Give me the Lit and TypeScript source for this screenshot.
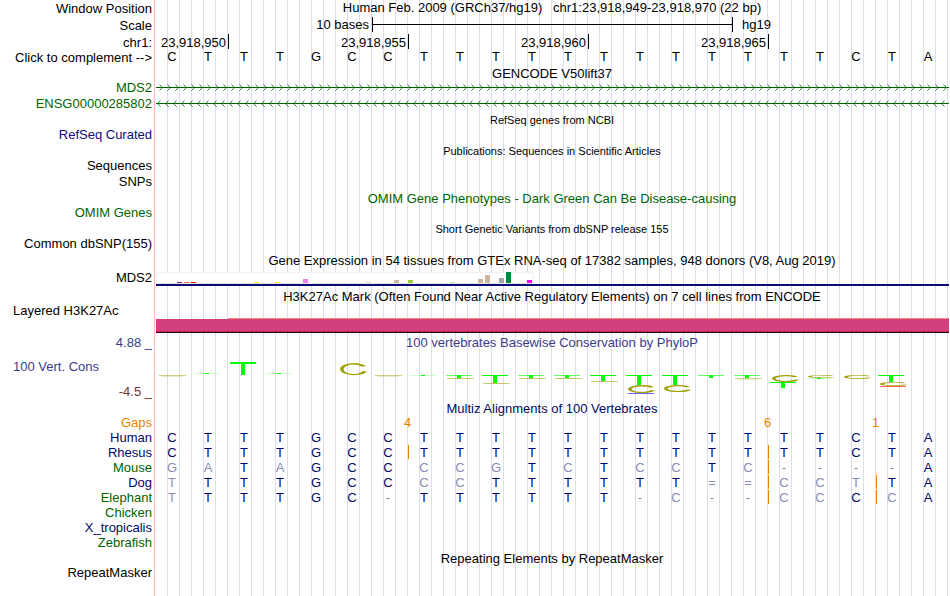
import { LitElement, html, svg, css, nothing } from "lit";
import { customElement, property } from "lit/decorators.js";
import { classMap } from "lit/directives/class-map.js";

const REFERENCE = "CTTTGCCTTTTTTTTTTTTCTA";

interface Species {
  name: string;
  tone: string;
  bases: string;
  gaps: number[];
}

const SPECIES: Species[] = [
  { name: "Human", tone: "navy", bases: REFERENCE, gaps: [] },
  { name: "Rhesus", tone: "navy", bases: REFERENCE, gaps: [7, 17] },
  { name: "Mouse", tone: "green", bases: "GATAGCCCCGTCTCCTC----A", gaps: [17] },
  { name: "Dog", tone: "navy", bases: "TTTTGCCCCTTTTTT==CCTTA", gaps: [17, 20] },
  { name: "Elephant", tone: "green", bases: "TTTTGC-TTTTTT-C--CCCCA", gaps: [17, 20] },
  { name: "Chicken", tone: "green", bases: "", gaps: [] },
  { name: "X_tropicalis", tone: "navy", bases: "", gaps: [] },
  { name: "Zebrafish", tone: "green", bases: "", gaps: [] },
];

/* Tissue slot, bar height and colour of each expressed tissue */
const TISSUES: [number, number, string][] = [
  [3, 1, "#8b1c62"], [4, 1, "#ee6a50"], [5, 1, "#ff0000"],
  [14, 1, "#eeee00"], [17, 1, "#eeee00"], [21, 4, "#ee82ee"],
  [30, 1, "#eed5d2"], [34, 3, "#cdb79e"], [36, 3, "#9acd32"],
  [42, 1, "#b4eeb4"], [46, 4, "#cdb79e"], [47, 8, "#cdb79e"],
  [49, 5, "#a6a6a6"], [50, 11, "#008b45"], [53, 3, "#ff00ff"],
];

/* Logo marks per base: kind, top, height */
type Mark = [string, number, number];
const LOGO: Mark[][] = [
  [["C", 25, 2]], [["T", 23, 1]], [["T", 12, 13]], [["T", 23, 1]], [],
  [["C", 13, 12]], [["C", 25, 2]], [["T", 25, 1]],
  [["T", 25, 3], ["C", 28, 1]], [["T", 25, 8], ["C", 33, 1]],
  [["T", 25, 3], ["C", 28, 1]], [["T", 25, 3], ["C", 28, 1]],
  [["T", 25, 6], ["C", 31, 1]], [["T", 25, 10], ["C", 35, 8], ["A", 43, 1]],
  [["T", 25, 10], ["C", 35, 7]], [["T", 25, 3]],
  [["T", 25, 3], ["C", 28, 2]], [["C", 25, 7], ["T", 32, 6]],
  [["C", 25, 3], ["T", 28, 1]], [["C", 25, 4]],
  [["T", 25, 7], ["C", 32, 4], ["X", 36, 1]], [],
];

function mark([kind, y, h]: Mark) {
  if (kind === "T") {
    const tone = h > 5 ? 1 : h > 2 ? 0.6 : 0.2;
    return svg`
      <rect x="4" y=${y} width="26" height=${h > 12 ? 2 : 1} fill="#00ff00" fill-opacity=${tone}></rect>
      <rect x="15" y=${y} width="4" height=${h} fill="#00ff00"></rect>`;
  }
  if (kind === "C") {
    if (h < 3) {
      return svg`
        <rect x="5" y=${y} width="27" height="1" fill="#a0a000" fill-opacity="0.5"></rect>
        <rect x="8" y=${y + h - 1} width="20" height="1" fill="#a0a000" fill-opacity="0.2"></rect>`;
    }
    const r = h / 2;
    const c = y + r;
    const t = Math.max(r - 1.3, r * 0.65);
    return svg`<path fill="#a0a000" d="M32 ${c - r * 0.5} A14 ${r} 0 1 0 33 ${c + r * 0.4}
      L29 ${c + t * 0.4} A10 ${t} 0 1 1 28 ${c - t * 0.5} Z"></path>`;
  }
  return svg`<rect x="6" y=${y} width="26" height="1"
    fill=${kind === "A" ? "#0000ff" : "#ff0000"} fill-opacity="0.6"></rect>`;
}

@customElement("track-row")
class TrackRow extends LitElement {
  @property() label = "";
  @property({ reflect: true }) tone = "black";
  @property({ reflect: true }) size = "m";

  static styles = css`
    :host { display: grid; grid-template-columns: 154px minmax(0, 1fr); line-height: 15px; }
    :host([size="l"]) { line-height: 16px; }
    :host([size="xl"]) { line-height: 18px; }
    .label { text-align: right; padding-right: 2px; white-space: nowrap; }
    :host([tone="navy"]) .label { color: #0c0c78; }
    :host([tone="green"]) .label { color: #006400; }
    :host([tone="blue"]) .label { color: #3c3c8c; }
    :host([tone="orange"]) .label { color: #e68200; }
  `;

  render() {
    return html`<div class="label"><slot name="label">${this.label}</slot></div><div><slot></slot></div>`;
  }
}

@customElement("app-root")
class AppRoot extends LitElement {
  static styles = css`
    :host {
      display: block;
      min-height: 100vh;
      box-sizing: border-box;
      padding-top: 1px;
      color: #000;
      font: 13px/15px "Liberation Sans", Arial, sans-serif;
      background:
        linear-gradient(#ffb4b4, #ffb4b4) 154px 0 / 1px 100% no-repeat,
        linear-gradient(#fff, #fff) 0 0 / 167px 100% no-repeat,
        linear-gradient(90deg, #dcdcf8 1px, transparent 1px) 167px 0 / calc((100% - 158px) / 66) 100%,
        #fff;
    }
    h2, p { margin: 0; font: inherit; text-align: center; white-space: pre; }
    h2 { padding-left: 154px; margin: 1px 0 -1px; }
    .m { line-height: 15px; }
    .l { line-height: 16px; }
    .region { line-height: 13px; }
    .small { font-size: 11px; }
    .navy { color: #000a64; }
    .green { color: #006400; }
    .blue { color: #3c3c8c; }
    .tight { margin: -1px 0; }
    .tight-top { margin-top: -1px; }
    .space { margin-top: 2px; }
    .row-space { margin-top: 1px; }
    .wide-space { margin-top: 3px; }
    button { border: 0; padding: 0; background: none; font: inherit; color: inherit; cursor: pointer; }
    svg { display: block; }

    .ruler { display: grid; grid-template-columns: repeat(22, minmax(0, 1fr)); padding: 0 1px 0 3px; }
    .tick { border-right: 1px solid #000; text-align: right; padding-right: 2px; height: 15px; line-height: 17px; white-space: nowrap; }
    .scale { padding-bottom: 3px; line-height: 15px; }
    .scale .tick { padding-right: 3px; line-height: 15px; }
    .bar { border-right: 1px solid #000; background: linear-gradient(#000, #000) 0 7px / 100% 1px no-repeat; }
    .assembly { padding-left: 9px; }
    .c1-2 { grid-column: 1 / 3; }
    .c1-6 { grid-column: 1 / 7; }
    .c4-7 { grid-column: 4 / 8; }
    .c7-16 { grid-column: 7 / 17; }
    .c9-12 { grid-column: 9 / 13; }
    .c14-17 { grid-column: 14 / 18; }
    .c17-20 { grid-column: 17 / 21; }

    .bases { display: grid; grid-template-columns: repeat(22, minmax(0, 1fr)); padding-right: 4px; text-align: center; line-height: 13px; }
    .counts { line-height: 15px; color: #e68200; }
    .count { padding-left: 3px; }
    .c7 { grid-column: 7 / 9; }
    .c17 { grid-column: 17 / 19; }
    .c20 { grid-column: 20 / 22; }

    .strand { width: 100%; height: 16px; padding: 0 1px 0 2px; box-sizing: border-box; }
    .expression { margin: 0 1px 0 2px; border-bottom: 2px solid #0c0c78; padding-top: 2px; }
    .signal { margin: 14px 1px 1px 2px; padding-left: 72px; background: linear-gradient(#d2407e, #d2407e) 0 1px / 100% 12px no-repeat; border-bottom: 1px solid #200818; }
    .signal-top { height: 13px; border-top: 1px solid #fa8072; box-sizing: border-box; }
    .signal-base { height: 1px; margin-left: -72px; background: #c82846; }
    .left { text-align: left; padding-left: 13px; }
    .layered { line-height: 14px; }
    .range { display: flex; flex-direction: column; justify-content: space-between; height: 50px; padding-top: 9px; box-sizing: border-box; }
    .low { color: #783232; }

    table { width: calc(100% - 4px); table-layout: fixed; border-collapse: collapse; }
    th { width: 154px; box-sizing: border-box; padding: 0 2px 0 0; font-weight: normal; text-align: right; }
    td { padding: 0; text-align: center; color: #000a64; height: 15px; }
    td.differs { color: #8c8cb4; }
    td.gap { background: linear-gradient(#e68200, #e68200) 2px 0 / 1px 14px no-repeat; }
  `;

  private strand(id: string, chevron: string) {
    return html`<svg class="strand" aria-hidden="true">
      <defs>
        <pattern id=${id} width="8" height="16" patternUnits="userSpaceOnUse">
          <path d=${chevron} fill="none" stroke="#006400" stroke-width="0.8"></path>
          <path d="M0 7.500H8" stroke="#006400"></path>
        </pattern>
      </defs>
      <rect width="100%" height="16" fill="url(#${id})"></rect>
    </svg>`;
  }

  private expression() {
    return html`<svg width="378" height="12" role="img" aria-label="Expression of MDS2 by tissue">
      <rect x="0.500" y="0.500" width="377" height="11" fill="#fff" stroke="#f2f2f2"></rect>
      <rect y="11" width="378" height="1" fill="#e4e4e4"></rect>
      ${TISSUES.map(([slot, h, color]) => svg`<rect x=${slot * 7} y=${11 - h} width="5" height=${h} fill=${color}></rect>`)}
    </svg>`;
  }

  private speciesRow(s: Species) {
    return html`<tr>
      <th scope="row" class=${s.tone}>${s.name}</th>
      ${Array.from(REFERENCE, (ref, i) => {
        const base = s.bases[i];
        return html`<td class=${classMap({ differs: !!base && base !== ref, gap: s.gaps.includes(i) })}>${base ?? nothing}</td>`;
      })}
    </tr>`;
  }

  render() {
    return html`
      <track-row size="l" label="Window Position">
        <p class="region">Human Feb. 2009 (GRCh37/hg19)   chr1:23,918,949-23,918,970 (22 bp)</p>
      </track-row>
      <track-row size="xl" label="Scale">
        <div class="ruler scale">
          <span class="tick c1-6">10 bases</span><span class="bar c7-16"></span><span class="assembly c17-20">hg19</span>
        </div>
      </track-row>
      <track-row size="l" label="chr1:">
        <div class="ruler tight-top">
          <span class="tick c1-2">23,918,950</span><span class="tick c4-7">23,918,955</span>
          <span class="tick c9-12">23,918,960</span><span class="tick c14-17">23,918,965</span>
        </div>
      </track-row>
      <track-row class="tight" size="l">
        <button slot="label">Click to complement --&gt;</button>
        <div class="bases">${Array.from(REFERENCE, (b) => html`<span>${b}</span>`)}</div>
      </track-row>

      <h2 class="m">GENCODE V50lift37</h2>
      <track-row size="l" tone="green" label="MDS2">${this.strand("forward", "M3.500 4.500L6.500 7.500L3.500 10.500")}</track-row>
      <track-row size="l" tone="green" label="ENSG00000285802">${this.strand("reverse", "M4.500 4.500L1.500 7.500L4.500 10.500")}</track-row>

      <h2 class="m small">RefSeq genes from NCBI</h2>
      <track-row tone="navy" label="RefSeq Curated"></track-row>
      <h2 class="m small space">Publications: Sequences in Scientific Articles</h2>
      <track-row size="l" label="Sequences"></track-row>
      <track-row size="l" label="SNPs"></track-row>
      <h2 class="m green">OMIM Gene Phenotypes - Dark Green Can Be Disease-causing</h2>
      <track-row tone="green" label="OMIM Genes"></track-row>
      <h2 class="m small space">Short Genetic Variants from dbSNP release 155</h2>
      <track-row label="Common dbSNP(155)"></track-row>

      <h2 class="l space">Gene Expression in 54 tissues from GTEx RNA-seq of 17382 samples, 948 donors (V8, Aug 2019)</h2>
      <track-row class="space" size="l" label="MDS2"><div class="expression">${this.expression()}</div></track-row>

      <h2 class="l wide-space">H3K27Ac Mark (Often Found Near Active Regulatory Elements) on 7 cell lines from ENCODE</h2>
      <track-row>
        <div slot="label" class="left layered">Layered H3K27Ac</div>
        <div class="signal"><div class="signal-top"></div><div class="signal-base"></div></div>
      </track-row>

      <track-row class="row-space" size="l" tone="blue" label="4.88 _"><p class="blue">100 vertebrates Basewise Conservation by PhyloP</p></track-row>
      <track-row class="tight-top" size="l" tone="blue">
        <div slot="label" class="range"><span class="left">100 Vert. Cons</span><span class="low">-4.5 _</span></div>
        <div class="bases" role="img" aria-label="Conservation logo">
          ${LOGO.map((marks) => html`<svg width="36" height="50">${marks.map(mark)}</svg>`)}
        </div>
      </track-row>

      <h2 class="m navy">Multiz Alignments of 100 Vertebrates</h2>
      <track-row tone="orange" label="Gaps">
        <div class="bases counts"><span class="count c7">4</span><span class="count c17">6</span><span class="count c20">1</span></div>
      </track-row>
      <table aria-label="Multiz alignment"><tbody>${SPECIES.map((s) => this.speciesRow(s))}</tbody></table>

      <h2 class="m">Repeating Elements by RepeatMasker</h2>
      <track-row label="RepeatMasker"></track-row>
    `;
  }
}
